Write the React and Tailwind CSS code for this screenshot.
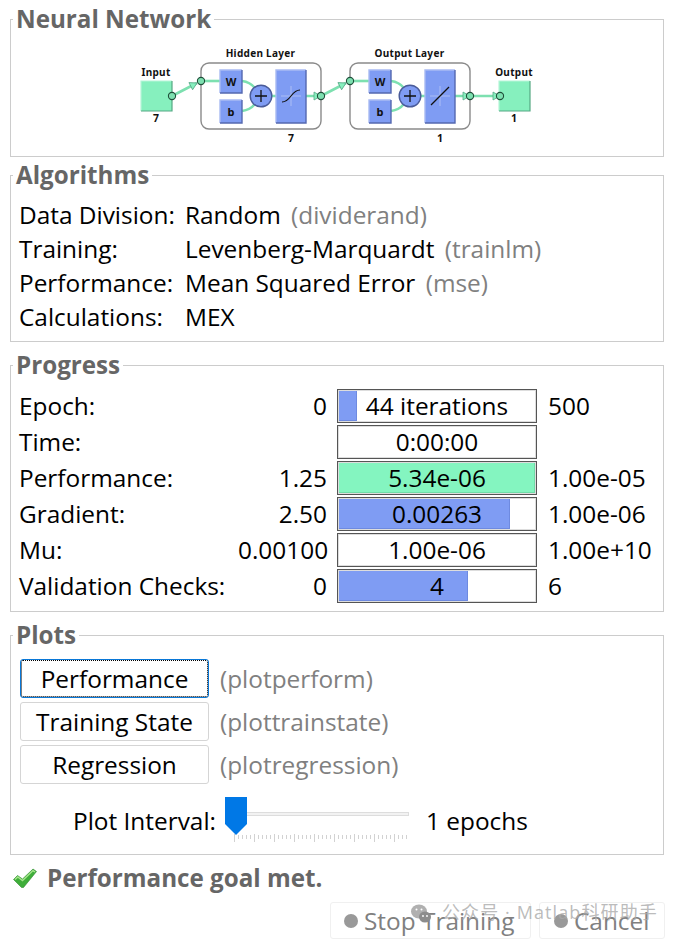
function Node({ x, y }) {
  return <circle cx={x} cy={y} r="3.6" fill="#7de0b0" stroke="#1f4f3a" strokeWidth="1.1" />
}

function Arrow({ x, y, angle = 0 }) {
  return <polygon points="-7,-4 0,0 -7,4" transform={`translate(${x} ${y}) rotate(${angle})`} fill="#86f0be" stroke="#5aa888" strokeWidth="0.8" />
}

function BlueBox({ x, y, w, h, children }) {
  return (
    <g>
      <rect x={x} y={y} width={w} height={h} fill="#7f9cf3" />
      <path d={`M${x} ${y + h}V${y}H${x + w}`} fill="none" stroke="#a9bbf3" strokeWidth="1.4" />
      <path d={`M${x} ${y + h}H${x + w}V${y}`} fill="none" stroke="#5468b0" strokeWidth="1.4" />
      {children}
    </g>
  )
}

function Layer({ x, title, size, linear }) {
  const sumX = x + 60
  return (
    <g>
      <text x={x + 59.5} y="57" textAnchor="middle" fontSize="10" fontWeight="700" letterSpacing="0.3" fill="#111">{title}</text>
      <rect x={x} y="63" width="120" height="66" rx="8" fill="#fff" stroke="#8a8a8a" strokeWidth="1.4" />
      <path d={`M${x} 81H${x + 22}`} stroke="#7de0b0" strokeWidth="2.6" fill="none" />
      <path d={`M${x + 41} 81Q${x + 49} 82 ${x + 54} 88`} stroke="#7de0b0" strokeWidth="2.6" fill="none" />
      <path d={`M${x + 41} 111Q${x + 49} 110 ${x + 54} 104`} stroke="#7de0b0" strokeWidth="2.6" fill="none" />
      <path d={`M${x + 71} 96H${x + 75}M${x + 105} 96H${x + 120}`} stroke="#7de0b0" strokeWidth="2.6" fill="none" />
      <BlueBox x={x + 19} y={70} w={22} h={23}>
        <text x={x + 30} y="86" textAnchor="middle" fontSize="11" fontWeight="700" fill="#111">W</text>
      </BlueBox>
      <BlueBox x={x + 19} y={100} w={22} h={23}>
        <text x={x + 30} y="116" textAnchor="middle" fontSize="11" fontWeight="700" fill="#111">b</text>
      </BlueBox>
      <circle cx={sumX} cy="96" r="10.8" fill="#7f9cf3" stroke="#4a5b99" strokeWidth="1.4" />
      <path d={`M${sumX - 6} 96H${sumX + 6}M${sumX} 90V102`} stroke="#111" strokeWidth="1.3" />
      <BlueBox x={x + 75} y={70} w={30} h={53}>
        <path d={`M${x + 80} 96H${x + 100}M${x + 90} 86V106`} stroke="#b9c8f5" strokeWidth="0.8" />
        {linear
          ? <path d={`M${x + 81} 105L${x + 99} 87`} stroke="#111" strokeWidth="1.2" fill="none" />
          : <path d={`M${x + 81} 102C${x + 90} 102 ${x + 90} 90 ${x + 99} 90`} stroke="#111" strokeWidth="1.2" fill="none" />}
      </BlueBox>
      <text x={x + 90} y="142" textAnchor="middle" fontSize="10.5" fontWeight="700" fill="#111">{size}</text>
    </g>
  )
}

function Terminal({ x, label, size }) {
  return (
    <g>
      <text x={x + 15} y="76" textAnchor="middle" fontSize="10" fontWeight="700" letterSpacing="0.3" fill="#111">{label}</text>
      <rect x={x} y="81" width="31" height="30" fill="#86f0be" />
      <path d={`M${x} 111V81H${x + 31}`} fill="none" stroke="#b6f6d8" strokeWidth="1.2" />
      <path d={`M${x} 111H${x + 31}V81`} fill="none" stroke="#55a883" strokeWidth="1.2" />
      <text x={x + 15} y="122" textAnchor="middle" fontSize="10.5" fontWeight="700" fill="#111">{size}</text>
    </g>
  )
}

function NetworkDiagram() {
  return (
    <svg width="410" height="110" viewBox="130 40 410 110" className="block" style={{ fontFamily: '"Noto Sans", sans-serif' }}>
      <Terminal x={140} label="Input" size="7" />
      <Terminal x={498} label="Output" size="1" />
      <Layer x={200} title="Hidden Layer" size="7" />
      <Layer x={349} title="Output Layer" size="1" linear />
      <path d="M171 96L196 83M320 96L345 83M469 96H497" stroke="#7de0b0" strokeWidth="2.6" fill="none" />
      <Arrow x={196} y={83} angle={-27} />
      <Arrow x={345} y={83} angle={-27} />
      <Arrow x={320} y={96} />
      <Arrow x={469} y={96} />
      <Arrow x={499} y={96} />
      <Node x={171} y={96} />
      <Node x={200} y={81} />
      <Node x={320} y={96} />
      <Node x={349} y={81} />
      <Node x={469} y={96} />
      <Node x={499} y={96} />
    </svg>
  )
}

function Panel({ title, className, children }) {
  return (
    <fieldset className={`border border-[#cccccc] ${className}`}>
      <legend className="ml-[2px] px-[3px] text-[24.2px] leading-[32px] font-bold text-[#666666]">{title}</legend>
      {children}
    </fieldset>
  )
}

const algorithms = [
  ["Data Division:", "Random", "(dividerand)"],
  ["Training:", "Levenberg-Marquardt", "(trainlm)"],
  ["Performance:", "Mean Squared Error", "(mse)"],
  ["Calculations:", "MEX", ""],
]

const progress = [
  { label: "Epoch:", start: "0", text: "44 iterations", end: "500", pct: 9, color: "bg-[#7f9cf3] border-[#6e8ae0]" },
  { label: "Time:", start: "", text: "0:00:00", end: "", pct: 0, color: "" },
  { label: "Performance:", start: "1.25", text: "5.34e-06", end: "1.00e-05", pct: 100, color: "bg-[#84f5c0] border-[#70dca8]" },
  { label: "Gradient:", start: "2.50", text: "0.00263", end: "1.00e-06", pct: 87, color: "bg-[#7f9cf3] border-[#6e8ae0]" },
  { label: "Mu:", start: "0.00100", text: "1.00e-06", end: "1.00e+10", pct: 0, color: "" },
  { label: "Validation Checks:", start: "0", text: "4", end: "6", pct: 66, color: "bg-[#7f9cf3] border-[#6e8ae0]" },
]

const plots = [
  ["Performance", "(plotperform)"],
  ["Training State", "(plottrainstate)"],
  ["Regression", "(plotregression)"],
]

function ProgressBar({ text, pct, color }) {
  return (
    <div className="relative h-[34px] border border-[#555555] bg-white p-[1px] shadow-[inset_0_0_0_1px_#dddddd]">
      <div className="h-full relative">
        {pct > 0 && <div className={`h-full border-r border-b ${color}`} style={{ width: `${pct}%` }} />}
        <div className="absolute inset-0 flex items-center justify-center text-black">{text}</div>
      </div>
    </div>
  )
}

export default function App() {
  return (
    <div className="h-[942px] w-[675px] overflow-hidden bg-white text-[24.4px] leading-[32px] text-black relative" style={{ fontFamily: '"Open Sans", "Noto Sans", sans-serif' }}>
      <div className="flex flex-col gap-[2px] pl-[10px] pr-[11px] pt-[3px]">
        <Panel title="Neural Network" className="h-[154px]">
          <div className="flex justify-center pr-[3px] mt-[5px]">
            <NetworkDiagram />
          </div>
        </Panel>

        <Panel title="Algorithms" className="h-[183px]">
          <div className="grid grid-cols-[166px_1fr] auto-rows-[34px] items-center pl-[8px] pt-[7px]">
            {algorithms.map(([label, value, hint]) => (
              <div key={label} className="contents">
                <div>{label}</div>
                <div>{value} <span className="ml-[4px] text-[#808080]">{hint}</span></div>
              </div>
            ))}
          </div>
        </Panel>

        <Panel title="Progress" className="mt-[5px] h-[263px]">
          <div className="grid grid-cols-[219px_99px_200px_1fr] auto-rows-[36px] items-center pl-[8px] pt-[7px]">
            {progress.map((row) => (
              <div key={row.label} className="contents">
                <div>{row.label}</div>
                <div className="text-right pr-[10px] whitespace-nowrap">{row.start}</div>
                <ProgressBar text={row.text} pct={row.pct} color={row.color} />
                <div className="pl-[11px] whitespace-nowrap">{row.end}</div>
              </div>
            ))}
          </div>
        </Panel>

        <Panel title="Plots" className="mt-[5px] h-[236px]">
          <div className="flex flex-col gap-[4px] pl-[9px] pt-[8px]">
            {plots.map(([name, hint], i) => (
              <div key={name} className="flex items-center gap-[11px]">
                <button className={`h-[39px] w-[189px] rounded-[3px] border text-center ${i === 0 ? "border-[#0a78d7] outline-1 outline-dotted -outline-offset-2 outline-black" : "border-[#d5d5d5]"}`}>{name}</button>
                <span className="text-[#808080]">{hint}</span>
              </div>
            ))}
          </div>
          <div className="flex items-start pl-[62px] mt-[13px]">
            <span className="mt-[8px] w-[152px] whitespace-nowrap">Plot Interval:</span>
            <div className="relative h-[46px] w-[184px]">
              <div className="absolute left-[20px] right-0 top-[15px] h-[4px] border border-[#dddddd] bg-[#f2f2f2]" />
              <svg className="absolute left-[9px] top-[37px]" width="176" height="8" viewBox="0 0 176 8">
                {Array.from({ length: 45 }, (_, i) => (
                  <path key={i} d={`M${i * 4 + 0.5} ${i % 5 === 0 ? 0 : 1}V${i % 5 === 0 ? 8 : 5}`} stroke="#d2d2d2" strokeWidth="1" />
                ))}
              </svg>
              <svg className="absolute left-0 top-0" width="22" height="38" viewBox="0 0 22 38">
                <path d="M0 0H22V27L11 38L0 27Z" fill="#0078e6" />
              </svg>
            </div>
            <span className="ml-[17px] mt-[8px] whitespace-nowrap">1 epochs</span>
          </div>
        </Panel>
      </div>

      <div className="flex items-center gap-[10px] pl-[13px] pt-[7px]">
        <svg width="24" height="22" viewBox="0 0 24 22">
          <path d="M0.5 12.5L4.5 8.5L9.5 12L20 2L23.5 4.5L10.5 20.5H8.5Z" fill="#3fae3a" stroke="#2b8a2b" strokeWidth="0.6" />
          <path d="M2 12.5L4.8 10L9.5 13.6L20 3.6L22 5" fill="none" stroke="#a6e58c" strokeWidth="1.4" />
        </svg>
        <span className="font-bold text-[#666666] text-[24.2px]">Performance goal met.</span>
      </div>

      <div className="absolute left-[330px] top-[902px] flex gap-[8px]">
        <div className="flex h-[37px] w-[201px] items-center gap-[6px] rounded-[3px] border border-[#f0f0f0] pl-[13px] text-[#808080]">
          <span className="h-[14px] w-[14px] rounded-full bg-[#999999]" />
          Stop Training
        </div>
        <div className="flex h-[37px] w-[126px] items-center gap-[6px] rounded-[3px] border border-[#f0f0f0] pl-[14px] text-[#808080]">
          <span className="h-[14px] w-[14px] rounded-full bg-[#999999]" />
          Cancel
        </div>
      </div>

      <div className="absolute left-[411px] top-[900px] flex items-center gap-[11px] text-[18px] leading-[24px] tracking-[1.1px] text-[#aaaaaa]/80 whitespace-nowrap" style={{ fontFamily: '"Open Sans", "Noto Sans CJK SC", sans-serif' }}>
        <svg width="20" height="20" viewBox="0 0 20 20" className="mt-[4px]">
          <ellipse cx="8" cy="7.5" rx="8" ry="7" fill="#b0b0b0" />
          <ellipse cx="14" cy="13" rx="6" ry="5.5" fill="#8c8c8c" />
          <circle cx="5.5" cy="5.5" r="1" fill="#fff" />
          <circle cx="10.5" cy="5.5" r="1" fill="#fff" />
          <circle cx="12" cy="12" r="0.9" fill="#fff" />
          <circle cx="16" cy="12" r="0.9" fill="#fff" />
        </svg>
        公众号 · Matlab科研助手
      </div>
    </div>
  )
}
